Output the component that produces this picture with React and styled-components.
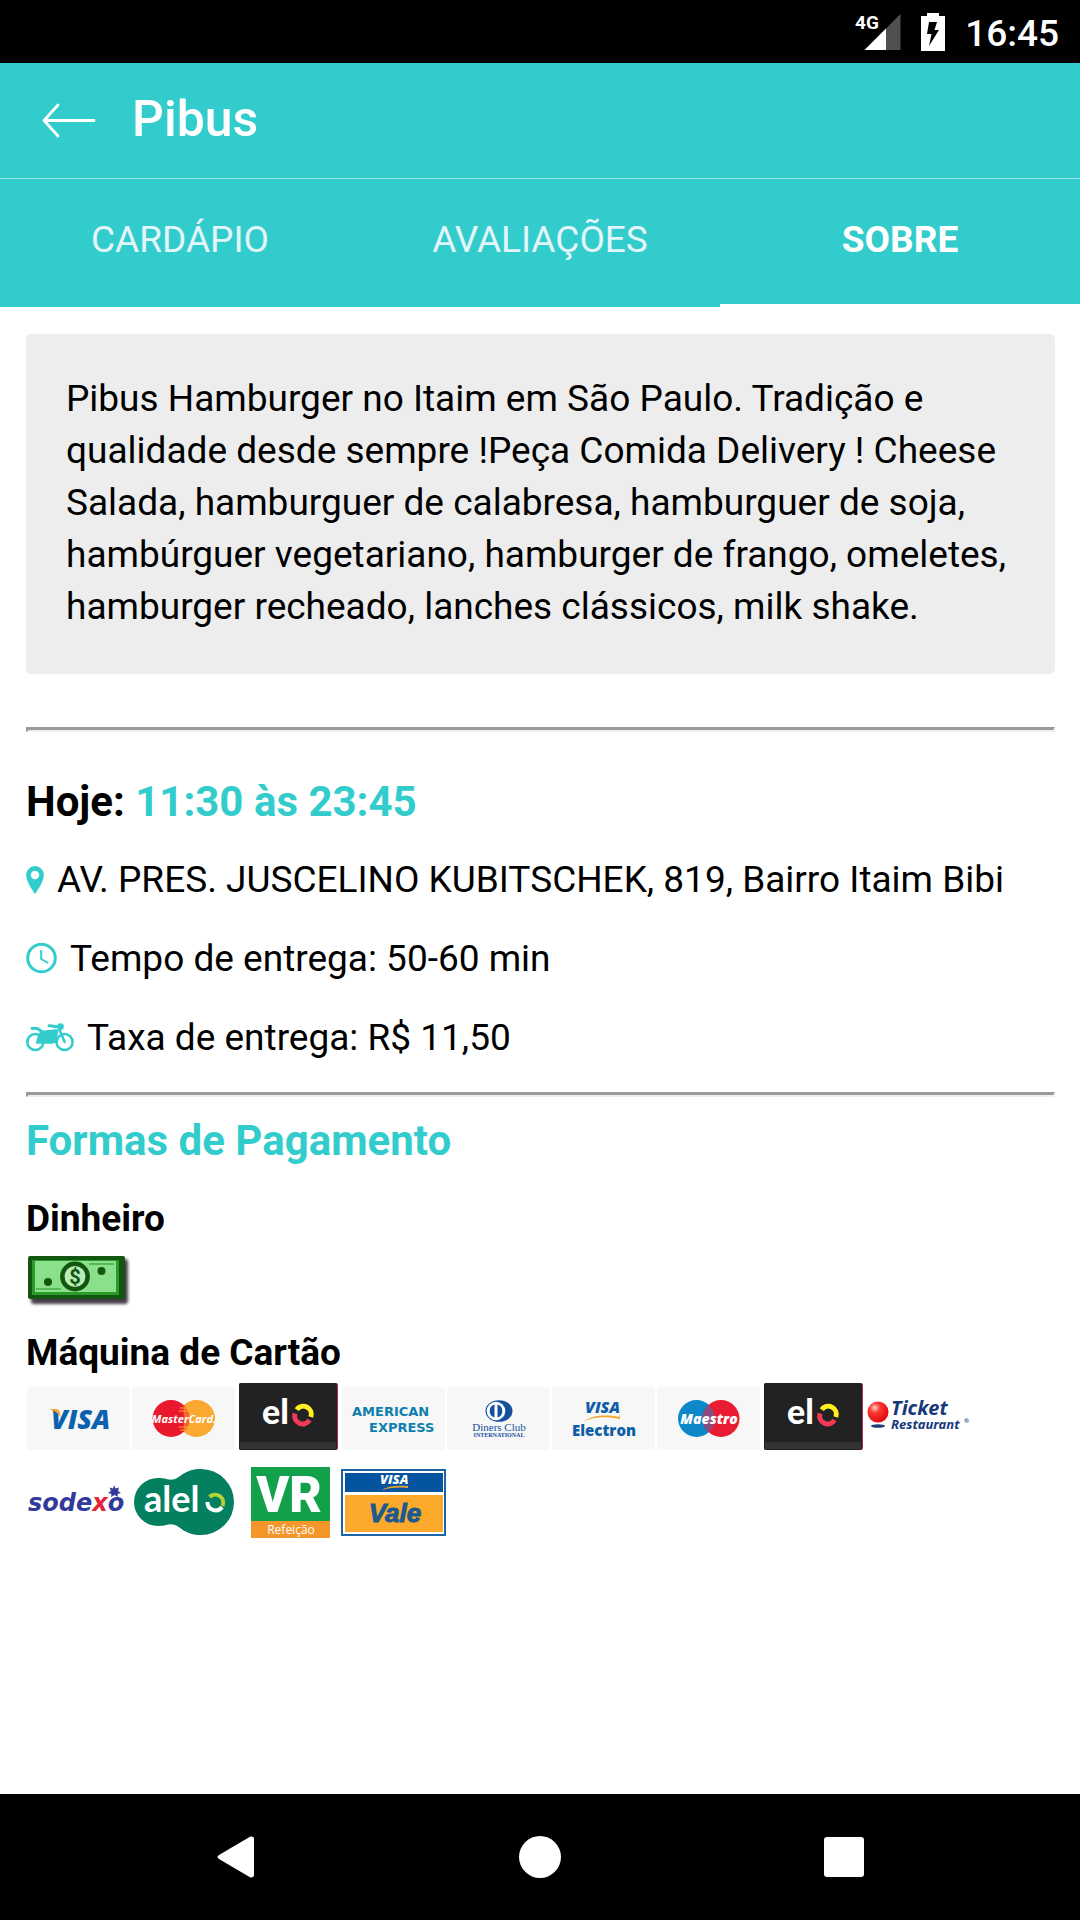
import React from "react";
import styled, { createGlobalStyle } from "styled-components";

const TEAL = "#33cccc";

const GlobalStyle = createGlobalStyle`
  * { box-sizing: border-box; }
  html, body { margin: 0; padding: 0; background: #fff; }
  body { font-family: Roboto, "Noto Sans", sans-serif; color: #000; }
`;

const Screen = styled.div`
  min-height: 100vh;
  display: flex;
  flex-direction: column;
`;

const StatusBar = styled.div`
  height: 63px;
  padding: 0 21px;
  display: flex;
  align-items: center;
  justify-content: flex-end;
  gap: 20px;
  background: #000;
  color: #fff;
`;

const Clock = styled.time`
  font-size: 37px;
  font-weight: 500;
  line-height: 44px;
  padding-top: 4px;
`;

const Header = styled.header`
  height: 116px;
  display: flex;
  align-items: center;
  gap: 36px;
  padding: 0 40px;
  background: ${TEAL};
  border-bottom: 1px solid #a3e8e8;
`;

const IconButton = styled.button`
  display: flex;
  padding: 0;
  border: 0;
  background: none;
  color: #fff;
  cursor: pointer;
`;

const Title = styled.h1`
  margin: 0;
  padding-bottom: 4px;
  font-size: 50px;
  font-weight: 500;
  line-height: 60px;
  color: #fff;
`;

const Tabs = styled.nav`
  display: flex;
  background: ${TEAL};
`;

const Tab = styled.a`
  flex: 1;
  height: 128px;
  padding-top: 39px;
  border-bottom: 3px solid ${(p) => (p.$active ? "#fff" : TEAL)};
  text-align: center;
  text-decoration: none;
  font-size: 37px;
  line-height: 44px;
  font-weight: ${(p) => (p.$active ? 700 : 400)};
  color: ${(p) => (p.$active ? "#fff" : "#e2f5fa")};
`;

const Content = styled.main`
  flex: 1;
  padding: 27px 25px 27px 26px;
`;

const Description = styled.p`
  margin: 0;
  padding: 39px 40px 41px;
  border-radius: 5px;
  background: #ededed;
  font-size: 37px;
  line-height: 52px;
`;

const Divider = styled.hr`
  height: 5px;
  margin: ${(p) => p.$space};
  border: solid;
  border-width: 3px 2px 2px 3px;
  border-color: #9a9a9a #eee #eee #9a9a9a;
`;

const SectionTitle = styled.h2`
  margin: 0;
  font-size: 42px;
  line-height: 50px;
  font-weight: 700;
  color: ${(p) => (p.$accent ? TEAL : "#000")};
`;

const Accent = styled.span`
  color: ${TEAL};
`;

const InfoList = styled.ul`
  margin: 13px 0 0;
  padding: 0;
  list-style: none;
`;

const InfoRow = styled.li`
  display: flex;
  align-items: center;
  gap: 13px;
  min-height: 79px;
  font-size: 37px;
  line-height: 44px;
  color: #000;

  svg { flex: none; color: ${TEAL}; }
`;

const MethodTitle = styled.h3`
  margin: ${(p) => p.$space};
  font-size: 37px;
  line-height: 44px;
  font-weight: 700;
`;

const BillFrame = styled.div`
  display: flex;
  margin-top: 12px;
`;

const CardList = styled.ul`
  display: flex;
  flex-wrap: wrap;
  row-gap: 9px;
  margin: 0;
  padding: 0;
  list-style: none;
`;

const CardItem = styled.li`
  display: flex;
`;

const NavBar = styled.footer`
  height: 126px;
  display: flex;
  align-items: center;
  justify-content: center;
  gap: 262px;
  background: #000;
`;

const Sans = '"Open Sans", sans-serif';

function Signal() {
  return (
    <svg width="48" height="40" viewBox="0 0 48 40" role="img" aria-label="Sinal 4G">
      <path d="M47.500 2V38H11.500Z" fill="#505050" />
      <path d="M33 16.500V38H11.500Z" fill="#fff" />
      <text x="2" y="17" fontFamily="Roboto, sans-serif" fontSize="19" fontWeight="700" fill="#fff">4G</text>
    </svg>
  );
}

function Battery() {
  return (
    <svg width="24" height="38" viewBox="0 0 24 38" role="img" aria-label="Bateria carregando">
      <path d="M6 0h12v3h6v35H0V3h6z" fill="#fff" />
      <path d="M8 9h8l-2.500 8H18L8 33l2.500-12H6z" fill="#000" />
    </svg>
  );
}

function Pin() {
  return (
    <svg width="18" height="28" viewBox="0 0 18 28" aria-hidden="true">
      <path fill="currentColor" fillRule="evenodd" d="M9 0a8.800 8.800 0 0 0-8.800 9C.2 15.500 6 23.500 9 28c3-4.500 8.800-12.500 8.800-19A8.800 8.800 0 0 0 9 0zm0 4.800a4.200 4.200 0 1 1 0 8.400 4.200 4.200 0 0 1 0-8.400z" />
    </svg>
  );
}

function ClockIcon() {
  return (
    <svg width="31" height="31" viewBox="0 0 31 31" fill="none" stroke="currentColor" aria-hidden="true">
      <circle cx="15.500" cy="15" r="13.800" strokeWidth="3" />
      <path d="M15.200 7v9l7 4" strokeWidth="2" />
    </svg>
  );
}

function Motorcycle() {
  return (
    <svg width="48" height="30" viewBox="0 0 48 30" fill="none" stroke="currentColor" strokeLinecap="round" strokeLinejoin="round" aria-hidden="true">
      <circle cx="9.300" cy="19" r="8" strokeWidth="2.600" />
      <circle cx="38.600" cy="19" r="8" strokeWidth="2.600" />
      <path d="M15 8.500 31 7l-2 6-3 7H10.500l2-7z" fill="currentColor" strokeWidth="1.500" />
      <path d="M6 5.500c4-1 7 0 9.500 3" strokeWidth="3" />
      <path d="M23 2.800c4-1 4 2 8 .7" strokeWidth="3" />
      <circle cx="34.500" cy="3.600" r="2.600" fill="currentColor" strokeWidth="1.500" />
      <path d="M33 5.500 38.600 19M31 8l-2 11M25 19c3 1 4-1 5-5" strokeWidth="2.600" />
    </svg>
  );
}

function Money() {
  return (
    <svg width="105" height="55" viewBox="0 0 105 55" role="img" aria-label="Dinheiro">
      <defs>
        <filter id="billShadow" x="-10%" y="-10%" width="125%" height="135%">
          <feGaussianBlur stdDeviation="1.500" />
        </filter>
      </defs>
      <rect x="5" y="6" width="97" height="45" rx="3" fill="#2b1f2b" opacity=".85" filter="url(#billShadow)" />
      <rect x="2" y="3" width="97" height="43" rx="2" fill="#13560f" />
      <rect x="6" y="7" width="87" height="35" fill="#2b9a2b" />
      <rect x="9" y="8" width="81" height="31" fill="#8be08b" />
      <path d="M63 11h25M10 36h25" stroke="#4aa84a" strokeWidth="1.500" />
      <circle cx="49" cy="23.500" r="12.700" fill="#b9ecb9" stroke="#13560f" strokeWidth="4.500" />
      <circle cx="22" cy="29" r="4" fill="#13560f" />
      <circle cx="75.500" cy="18" r="4" fill="#13560f" />
      <text x="49" y="31" textAnchor="middle" fontFamily="Roboto, sans-serif" fontWeight="700" fontSize="20" fill="#13560f">$</text>
    </svg>
  );
}

function Logo({ label, tile, children }) {
  return (
    <svg width="105" height="75" viewBox="0 0 105 75" role="img" aria-label={label}>
      {tile && <rect x="1" y="6" width="103" height="63" rx="3" fill="#f7f7f7" />}
      {children}
    </svg>
  );
}

function Visa() {
  return (
    <Logo label="Visa" tile>
      <text x="25" y="48" fontFamily={Sans} fontWeight="800" fontStyle="italic" fontSize="27" fill="#0a61ad">VISA</text>
      <path d="M23 28h7.500c1.500 0 2.500 1 3 3l1.500 6c-2.500-4.500-6-7.500-12-9z" fill="#f2a32c" />
    </Logo>
  );
}

function MasterCard() {
  return (
    <Logo label="MasterCard" tile>
      <circle cx="65.500" cy="37.500" r="18.500" fill="#f9a92f" />
      <circle cx="40" cy="37.500" r="18.500" fill="#e9182c" />
      <path d="M52.700 24.200a18.500 18.500 0 0 1 0 26.600" fill="#f9a92f" opacity=".55" />
      <path d="M49 27h7M48 30h10M48 46h10M49 49h7" stroke="#f9a92f" strokeWidth="1" />
      <text x="53" y="42" textAnchor="middle" fontFamily={Sans} fontWeight="700" fontStyle="italic" fontSize="11" fill="#fff">MasterCard.</text>
    </Logo>
  );
}

function Elo() {
  return (
    <Logo label="Elo">
      <rect x="3" y="2" width="99" height="67" rx="2" fill="#a8324a" />
      <rect x="3" y="2" width="98" height="67" rx="2" fill="#222" />
      <rect x="4" y="61" width="96" height="7" fill="#333" />
      <text x="26" y="43" fontFamily="Lato, sans-serif" fontWeight="900" fontSize="34" fill="#fff">el</text>
      <g fill="none" strokeWidth="5">
        <path d="M60.700 28.700A8 8 0 0 1 74.800 36" stroke="#fff01e" />
        <path d="M59 32.500A8 8 0 0 0 73.500 39" stroke="#f03a58" />
      </g>
    </Logo>
  );
}

function Amex() {
  return (
    <Logo label="American Express" tile>
      <g fontFamily="DejaVu Sans, sans-serif" fontWeight="700" fontSize="13" fill="#0c7fae">
        <text x="11" y="35">AMERICAN</text>
        <text x="28" y="51">EXPRESS</text>
      </g>
    </Logo>
  );
}

function Diners() {
  return (
    <Logo label="Diners Club International" tile>
      <ellipse cx="53" cy="30" rx="13.500" ry="10.800" fill="#14509b" />
      <circle cx="50" cy="30" r="9.300" fill="#fff" />
      <path d="M48.500 23.500a6.800 6.800 0 0 0 0 13zM51.500 23.500a6.800 6.800 0 0 1 0 13z" fill="#14509b" />
      <g fontFamily="Liberation Serif, serif" fill="#14509b" textAnchor="middle">
        <text x="53" y="50" fontSize="11">Diners Club</text>
        <text x="53" y="56" fontSize="6" fontWeight="700">INTERNATIONAL</text>
      </g>
    </Logo>
  );
}

function VisaElectron() {
  return (
    <Logo label="Visa Electron" tile>
      <text x="34" y="32" fontFamily={Sans} fontWeight="800" fontStyle="italic" fontSize="16" fill="#0f5fa8">VISA</text>
      <path d="M33 40c8-5 20-7 35-4l1-3v5c-14-3-26-2-36 2z" fill="#f6a52c" />
      <text x="53" y="55" textAnchor="middle" fontFamily={Sans} fontWeight="800" fontSize="15" fill="#0f5fa8">Electron</text>
    </Logo>
  );
}

function Maestro() {
  return (
    <Logo label="Maestro" tile>
      <circle cx="40.500" cy="37.500" r="18.500" fill="#0c87c8" />
      <circle cx="65" cy="37.500" r="18.500" fill="#e91c32" />
      <path d="M52.700 23.700a18.500 18.500 0 0 1 0 27.600a18.500 18.500 0 0 1 0-27.600" fill="#8b4c80" />
      <text x="53" y="43" textAnchor="middle" fontFamily={Sans} fontWeight="800" fontStyle="italic" fontSize="14" fill="#fff">Maestro</text>
    </Logo>
  );
}

function Ticket() {
  return (
    <Logo label="Ticket Restaurant">
      <defs>
        <radialGradient id="ticketBall" cx=".35" cy=".3" r=".7">
          <stop offset="0" stopColor="#ffd0c8" />
          <stop offset=".35" stopColor="#fb3a30" />
          <stop offset="1" stopColor="#e00a10" />
        </radialGradient>
      </defs>
      <circle cx="12" cy="31" r="10.500" fill="url(#ticketBall)" />
      <ellipse cx="12" cy="45" rx="7" ry="1.800" fill="#1d3c78" />
      <g fontFamily="Noto Sans, sans-serif" fontStyle="italic" fontWeight="700" fill="#17397b">
        <text x="25" y="34" fontSize="20">Ticket</text>
        <text x="25" y="48" fontSize="13">Restaurant</text>
        <text x="98" y="42" fontSize="6">®</text>
      </g>
    </Logo>
  );
}

function Sodexo() {
  return (
    <Logo label="Sodexo">
      <text x="2" y="46" fontFamily="DejaVu Sans, sans-serif" fontWeight="700" fontStyle="italic" fontSize="24" fill="#33399b">
        sode<tspan fill="#e3253b">x</tspan>o
      </text>
      <path d="m88 20 1.500 3.500 3.500-1-1 3.500 3 2-3.500 1 .5 3-3.500-2-3.500 2 .5-3-3.500-1 3-2-1.500-3.500 3.500 1z" fill="#33399b" />
    </Logo>
  );
}

function Alelo() {
  return (
    <Logo label="Alelo">
      <path d="M27 13C36 13 38 16 44 14C50 12 54 4 70 4A33 33 0 0 1 70 70C54 70 50 62 44 60C38 58 36 61 27 61A24 24 0 0 1 27 13Z" fill="#047f60" />
      <text x="13" y="47" fontFamily="Lato, sans-serif" fontWeight="700" fontSize="36" fill="#fff">alel</text>
      <g fill="none" strokeWidth="4">
        <path d="M76.500 37A8 8 0 0 0 91 42" stroke="#fff" />
        <path d="M78.600 32A8 8 0 0 1 91.500 41" stroke="#b5d334" />
      </g>
    </Logo>
  );
}

function VrRefeicao() {
  return (
    <Logo label="VR Refeição">
      <rect x="15" y="2" width="79" height="54" fill="#12a04a" />
      <rect x="15" y="56" width="79" height="17" fill="#f5962a" />
      <text x="53" y="47" textAnchor="middle" fontFamily="Roboto, sans-serif" fontWeight="900" fontSize="50" fill="#fff">VR</text>
      <text x="55" y="69" textAnchor="middle" fontFamily={Sans} fontSize="12" fill="#fff">Refeição</text>
    </Logo>
  );
}

function VisaVale() {
  return (
    <Logo label="Visa Vale">
      <rect x="1" y="5" width="103" height="65" fill="#fff" stroke="#1d64a5" strokeWidth="2" />
      <rect x="4" y="8" width="98" height="19" fill="#04549f" />
      <rect x="4" y="30" width="98" height="37" fill="#fca92c" />
      <text x="39" y="19" fontFamily={Sans} fontWeight="800" fontStyle="italic" fontSize="13" fill="#fff">VISA</text>
      <path d="M40 25c7-4 16-5 27-4v2c-11-1-19 0-27 2z" fill="#f6a52c" />
      <text x="54" y="57" textAnchor="middle" fontFamily="Liberation Sans, sans-serif" fontWeight="700" fontStyle="italic" fontSize="26" fill="#1b5a8c" stroke="#1b5a8c" strokeWidth="1">Vale</text>
    </Logo>
  );
}

const CARDS = [Visa, MasterCard, Elo, Amex, Diners, VisaElectron, Maestro, Elo, Ticket, Sodexo, Alelo, VrRefeicao, VisaVale];

const TABS = [
  { id: "cardapio", label: "CARDÁPIO" },
  { id: "avaliacoes", label: "AVALIAÇÕES" },
  { id: "sobre", label: "SOBRE", active: true },
];

export default function App() {
  return (
    <Screen>
      <GlobalStyle />
      <StatusBar>
        <Signal />
        <Battery />
        <Clock>16:45</Clock>
      </StatusBar>

      <Header>
        <IconButton type="button" aria-label="Voltar">
          <svg width="56" height="36" viewBox="0 0 56 36" fill="none" stroke="currentColor" strokeWidth="2.800" strokeLinecap="round" strokeLinejoin="round">
            <path d="M18 2 4 17.500 18 33M4 17.500h50" />
          </svg>
        </IconButton>
        <Title>Pibus</Title>
      </Header>

      <Tabs>
        {TABS.map((t) => (
          <Tab key={t.id} href={`#${t.id}`} $active={t.active} aria-current={t.active ? "page" : undefined}>
            {t.label}
          </Tab>
        ))}
      </Tabs>

      <Content>
        <Description>
          Pibus Hamburger no Itaim em São Paulo. Tradição e qualidade desde sempre !Peça Comida Delivery ! Cheese
          Salada, hamburguer de calabresa, hamburguer de soja, hambúrguer vegetariano, hamburger de frango, omeletes,
          hamburger recheado, lanches clássicos, milk shake.
        </Description>

        <Divider $space="53px 0 45px" />

        <SectionTitle>
          Hoje: <Accent>11:30 às 23:45</Accent>
        </SectionTitle>
        <InfoList>
          <InfoRow>
            <Pin />
            AV. PRES. JUSCELINO KUBITSCHEK, 819, Bairro Itaim Bibi
          </InfoRow>
          <InfoRow>
            <ClockIcon />
            Tempo de entrega: 50-60 min
          </InfoRow>
          <InfoRow>
            <Motorcycle />
            Taxa de entrega: R$ 11,50
          </InfoRow>
        </InfoList>

        <Divider $space="15px 0 19px" />

        <SectionTitle $accent>Formas de Pagamento</SectionTitle>
        <MethodTitle $space="31px 0 0">Dinheiro</MethodTitle>
        <BillFrame>
          <Money />
        </BillFrame>
        <MethodTitle $space="23px 0 6px">Máquina de Cartão</MethodTitle>
        <CardList>
          {CARDS.map((Card, i) => (
            <CardItem key={i}>
              <Card />
            </CardItem>
          ))}
        </CardList>
      </Content>

      <NavBar>
        <IconButton type="button" aria-label="Voltar">
          <svg width="42" height="42" viewBox="0 0 42 42" fill="currentColor">
            <path d="M4 19 35 .7Q39 0 39 3V39q0 3-4 2.300L4 23q-3-2 0-4z" />
          </svg>
        </IconButton>
        <IconButton type="button" aria-label="Início">
          <svg width="42" height="42" viewBox="0 0 42 42" fill="currentColor">
            <circle cx="21" cy="21" r="21" />
          </svg>
        </IconButton>
        <IconButton type="button" aria-label="Recentes">
          <svg width="42" height="42" viewBox="0 0 42 42" fill="currentColor">
            <rect x="1" y="1" width="40" height="40" rx="3" />
          </svg>
        </IconButton>
      </NavBar>
    </Screen>
  );
}
